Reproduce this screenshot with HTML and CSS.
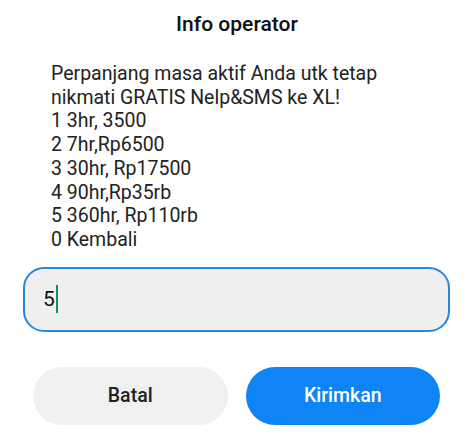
FILE: index.html
```html
<!DOCTYPE html>
<html lang="id">
<head>
  <meta charset="UTF-8" />
  <meta name="viewport" content="width=device-width, initial-scale=1.0"/>
  <title>Info operator</title>
  <link rel="stylesheet" href="styles.css">
</head>
<body>

<div class="dialog">
  <h2 class="dialog-title">Info operator</h2>

  <div class="message">
    <p>Perpanjang masa aktif Anda utk tetap</p>
    <p>nikmati GRATIS Nelp&amp;SMS ke XL!</p>
    <p>1 3hr, 3500</p>
    <p>2 7hr,Rp6500</p>
    <p>3 30hr, Rp17500</p>
    <p>4 90hr,Rp35rb</p>
    <p>5 360hr, Rp110rb</p>
    <p>0 Kembali</p>
  </div>

  <div class="reply-box">
    <span class="reply-text">5</span><span class="caret"></span>
  </div>

  <div class="actions">
    <button class="btn btn-cancel">Batal</button>
    <button class="btn btn-send">Kirimkan</button>
  </div>
</div>

</body>
</html>
```

FILE: styles.css
```css
body {
  margin: 0;
  font-family: Roboto, 'Noto Sans', sans-serif;
  background-color: #fff;
  color: #1c1c1c;
}
.dialog {
  width: 474px;
  height: 440px;
  padding-top: 12px;
  box-sizing: border-box;
}
.dialog-title {
  margin: 0;
  text-align: center;
  font-family: 'Roboto Medium', Roboto, sans-serif;
  font-size: 21px;
  line-height: 24px;
  font-weight: 500;
  color: #111;
}
.message {
  margin-top: 26px;
  padding-left: 51px;
  font-size: 19.5px;
  line-height: 23.7px;
  color: #222;
}
.message p {
  margin: 0;
}
.reply-box {
  margin: 15px 24px 0 23px;
  height: 65px;
  box-sizing: border-box;
  border: 2px solid #2a85e2;
  border-radius: 21px;
  background: #efefef;
  display: flex;
  align-items: center;
  padding-left: 18px;
}
.reply-text {
  font-size: 21px;
  color: #111;
}
.caret {
  width: 2px;
  height: 28px;
  margin-left: 1px;
  background: #138a6a;
}
.actions {
  display: flex;
  gap: 18px;
  margin-top: 35px;
  padding: 0 34px 0 33px;
}
.btn {
  flex: 1;
  height: 58px;
  border: none;
  border-radius: 29px;
  font-family: 'Roboto Medium', Roboto, sans-serif;
  font-size: 19.5px;
  font-weight: 500;
}
.btn-cancel {
  background: #f0f0f0;
  color: #222;
}
.btn-send {
  background: #0f84f5;
  color: #fff;
}
```
